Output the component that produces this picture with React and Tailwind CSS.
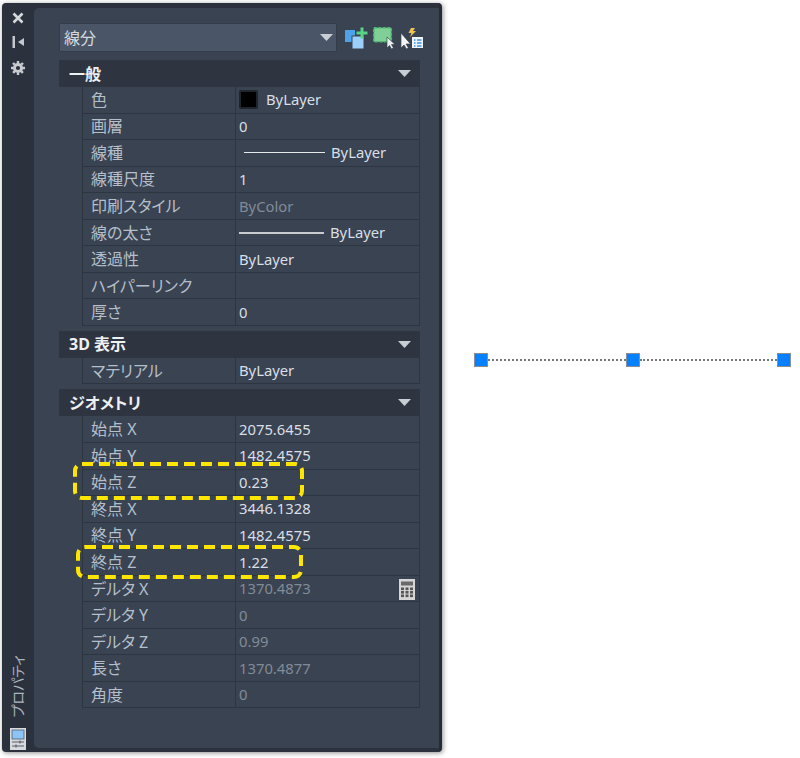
import React from 'react';

const general = [
  { name: '色', value: 'ByLayer', swatch: true },
  { name: '画層', value: '0' },
  { name: '線種', value: 'ByLayer', line: 'w-[81px] ml-[5px] mr-[6px] h-px bg-[#e6e9ec]' },
  { name: '線種尺度', value: '1' },
  { name: '印刷スタイル', value: 'ByColor', dim: true },
  { name: '線の太さ', value: 'ByLayer', line: 'w-[85px] mr-[6px] h-[2px] bg-[#c8ccd0]' },
  { name: '透過性', value: 'ByLayer' },
  { name: 'ハイパーリンク', value: '' },
  { name: '厚さ', value: '0' },
];

const display3d = [{ name: 'マテリアル', value: 'ByLayer' }];

const geometry = [
  { name: '始点 X', value: '2075.6455' },
  { name: '始点 Y', value: '1482.4575' },
  { name: '始点 Z', value: '0.23' },
  { name: '終点 X', value: '3446.1328' },
  { name: '終点 Y', value: '1482.4575' },
  { name: '終点 Z', value: '1.22' },
  { name: 'デルタ X', value: '1370.4873', dim: true, calc: true },
  { name: 'デルタ Y', value: '0', dim: true },
  { name: 'デルタ Z', value: '0.99', dim: true },
  { name: '長さ', value: '1370.4877', dim: true },
  { name: '角度', value: '0', dim: true },
];

const Caret = ({ className }) => (
  <svg width="13" height="7" viewBox="0 0 13 7" className={className}>
    <path d="M0 0h13L6.5 7z" fill="#c9ced4" />
  </svg>
);

const Calculator = () => (
  <svg width="16" height="21" viewBox="0 0 16 21" className="absolute right-[4px] top-[3px]">
    <rect width="16" height="21" fill="#d6d6d6" />
    <rect x="2" y="2.5" width="12" height="4" fill="#6a6a6a" />
    {[8.5, 12, 15.5].map((y) =>
      [2, 6.5, 11].map((x) => <rect key={`${x}-${y}`} x={x} y={y} width="3" height="2.6" fill="#555" />)
    )}
  </svg>
);

const Row = ({ row }) => (
  <div className="flex h-[26.55px] pl-[23px]">
    <div className="flex w-[153px] items-center border-b border-l border-[#2d3541] pl-[8px] text-[16px] text-[#b4bfca] [font-feature-settings:'palt']">
      {row.name}
    </div>
    <div className={`relative flex flex-1 items-center border-b border-l border-r border-[#2d3541] pl-[3px] ${row.dim ? 'text-[#818b97]' : 'text-[#d9dfe5]'}`}>
      {row.swatch && <span className="mr-[8px] h-[19px] w-[19px] rounded-[2px] border-2 border-[#20252d] bg-black" />}
      {row.line && <span className={row.line} />}
      {row.value}
      {row.calc && <Calculator />}
    </div>
  </div>
);

const Section = ({ title, rows, className }) => (
  <div className={className}>
    <div className="flex h-[27px] items-center justify-between bg-[#2e3541] pl-[10px] pr-[9px] text-[16px] font-bold text-[#eef0f2] [font-feature-settings:'palt']">
      {title}
      <Caret />
    </div>
    {rows.map((row) => (
      <Row key={row.name} row={row} />
    ))}
  </div>
);

const DashedBox = ({ className, w, h }) => (
  <svg width={w} height={h} viewBox={`0 0 ${w} ${h}`} className={`absolute ${className}`}>
    <rect x="2" y="2" width={w - 4} height={h - 4} rx="7" fill="none" stroke="#ffe600" strokeWidth="4" strokeDasharray="11 6" />
  </svg>
);

const App = () => (
  <div
    className="flex h-[758px] w-[800px] overflow-hidden bg-white pl-[2px] pt-[3px] text-[14.8px] leading-none"
    style={{ fontFamily: '"Noto Sans", "Noto Sans CJK JP", sans-serif' }}
  >
    {/* palette */}
    <div className="relative flex h-[749px] w-[440px] shrink-0 rounded-[4px] border-r-[3px] border-[#262c36] bg-[#2b323d] shadow-[1px_1px_5px_rgba(0,0,0,0.45)]">
      {/* title strip */}
      <div className="flex w-[32px] shrink-0 flex-col items-center pb-[2px] pt-[9px]">
        <svg width="12" height="12" viewBox="0 0 12 12">
          <path d="M1.5 1.5l9 9M10.5 1.5l-9 9" stroke="#d5d8dc" strokeWidth="2.6" />
        </svg>
        <svg width="12" height="12" viewBox="0 0 12 12" className="mt-[12px]">
          <path d="M0.5 0h2.5v12H0.5zM12 2v8L6 6z" fill="#c4c8ce" />
        </svg>
        <svg width="14" height="14" viewBox="0 0 14 14" className="mt-[13px]">
          <circle cx="7" cy="7" r="3.6" fill="none" stroke="#c8ccd1" strokeWidth="3" />
          <path d="M7 0v14M0 7h14M2 2l10 10M12 2L2 12" stroke="#c8ccd1" strokeWidth="2.4" strokeDasharray="2.4 9.2" />
        </svg>
        <div className="mb-[11px] mt-auto rotate-180 text-[14px] text-[#aab4bf] [font-feature-settings:'palt'] [text-orientation:sideways] [writing-mode:vertical-rl]">
          プロパティ
        </div>
        <svg width="16" height="22" viewBox="0 0 16 22">
          <rect width="16" height="22" fill="#d8dade" />
          <rect x="2" y="2" width="12" height="9" fill="#8cc4f5" stroke="#50606f" strokeWidth="0.8" />
          <path d="M2 14h12M2 18h12M10 12.5v3M6 16.5v3" stroke="#555f6b" strokeWidth="1.2" />
        </svg>
      </div>

      {/* content */}
      <div className="mb-[4px] mt-[5px] min-w-0 flex-1 rounded-l-[5px] bg-[#3a4352] pl-[25px] pr-[19px] pt-[15px]">
        <div className="-mr-[4px] flex h-[30px] items-start">
          <div className="flex h-[29px] w-[278px] shrink-0 items-center justify-between rounded-[1px] border border-[#343c49] bg-[#4a5668] pl-[4px] pr-[3px] text-[16px] text-[#d6dade]">
            線分
            <Caret />
          </div>
          <svg width="23" height="22" viewBox="0 0 23 22" className="ml-[8px] mt-[4px] shrink-0">
            <rect x="0" y="3" width="10" height="12" fill="#4ca3ea" />
            <rect x="7" y="9" width="12" height="13" fill="#9bd0fa" stroke="#3a4352" />
            <path d="M17 0.500v11M11.500 6h11" stroke="#58d285" strokeWidth="3" />
          </svg>
          <svg width="23" height="22" viewBox="0 0 23 22" className="ml-[5px] mt-[4px] shrink-0">
            <rect x="0.8" y="0.8" width="17.500" height="14" fill="#7fcf97" stroke="#49b86d" strokeWidth="1.6" strokeDasharray="3 1.5" />
            <path d="M14 10v11l2.500-2.500 2 3.500 2-1-2-3.500h3.500z" fill="#eceff2" stroke="#2c333e" strokeWidth="0.6" />
          </svg>
          <svg width="23" height="21" viewBox="0 0 23 21" className="ml-[5px] mt-[5px] shrink-0">
            <path d="M10 0h4l-2 3h3l-6 6 1.500-4h-3z" fill="#f4c24f" />
            <rect x="11" y="9" width="11" height="11" fill="#eef3f7" />
            <path d="M13 12h1.500M16 12h4.500M13 15h1.500M16 15h4.500M13 18h1.500M16 18h4.500" stroke="#3f94dc" strokeWidth="1.6" />
            <path d="M0 5v15l3-3 2.500 4 2-1-2.500-4h4.500z" fill="#f2f4f6" stroke="#2c333e" strokeWidth="0.6" />
          </svg>
        </div>

        <Section title="一般" rows={general} className="mt-[7px]" />
        <Section title="3D 表示" rows={display3d} className="mt-[5px]" />
        <Section title="ジオメトリ" rows={geometry} className="mt-[5px]" />
      </div>

      {/* callouts */}
      <DashedBox className="left-[71px] top-[459px]" w={231} h={38} />
      <DashedBox className="left-[74px] top-[542px]" w={227} h={34} />
    </div>

    {/* selected line with grips */}
    <div className="ml-[32px] mt-[350px] flex h-[14px] w-[317px] items-center self-start">
      <span className="h-[14px] w-[14px] shrink-0 border border-[#8a8f96] bg-[#0580ff]" />
      <span className="flex-1 border-t-2 border-dotted border-[#777]" />
      <span className="h-[14px] w-[14px] shrink-0 border border-[#8a8f96] bg-[#0580ff]" />
      <span className="flex-1 border-t-2 border-dotted border-[#777]" />
      <span className="h-[14px] w-[14px] shrink-0 border border-[#8a8f96] bg-[#0580ff]" />
    </div>
  </div>
);

export default App;
